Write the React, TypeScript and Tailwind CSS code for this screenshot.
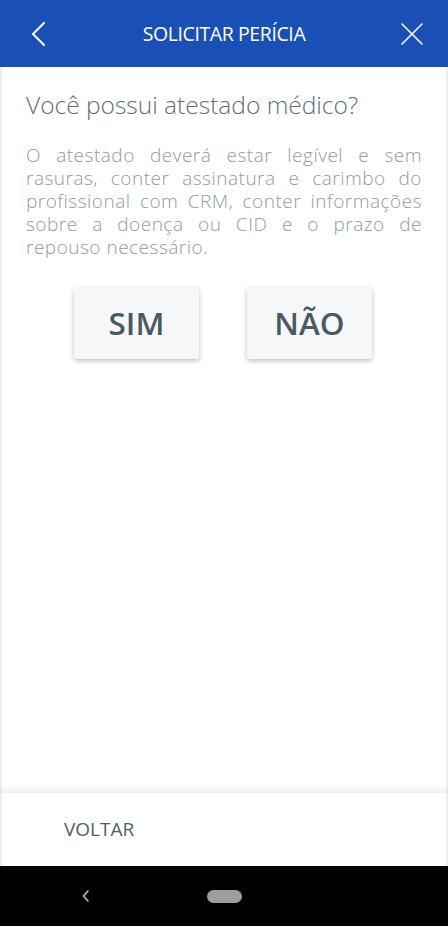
import React from 'react';

const lines = [
  'O atestado deverá estar legível e sem',
  'rasuras, conter assinatura e carimbo do',
  'profissional com CRM, conter informações',
  'sobre a doença ou CID e o prazo de',
];

export default function App() {
  return (
    <div className="flex h-[926px] w-[448px] flex-col bg-white font-['Open_Sans',sans-serif]">
      <header className="flex h-[67px] shrink-0 items-center justify-between bg-[#1a4fb5] px-[30px] text-white">
        <svg width="18" height="26" viewBox="0 0 18 26" fill="none">
          <path d="M14 2 L3 13 L14 24" stroke="white" strokeWidth="2" strokeLinecap="round" strokeLinejoin="round" />
        </svg>
        <h1 className="text-[19.5px] tracking-[-0.4px]">SOLICITAR PERÍCIA</h1>
        <svg width="24" height="24" viewBox="0 0 24 24" fill="none" className="-mr-[6px]">
          <path d="M2 2 L22 22 M22 2 L2 22" stroke="white" strokeWidth="1.6" strokeLinecap="round" />
        </svg>
      </header>

      <main className="flex flex-1 flex-col border-x-2 border-[#eeeeee] px-[24px] pt-[22px]">
        <h2 className="text-[24.5px] font-light leading-[32px] text-[#5f6e7a]">Você possui atestado médico?</h2>
        <p className="mt-[23px] text-[19px] font-light leading-[23px] tracking-[0.5px] text-[#8e9ca6]">
          {lines.map((l) => (
            <span key={l} className="block text-justify [text-align-last:justify]">
              {l}
            </span>
          ))}
          <span className="block">repouso necessário.</span>
        </p>
        <div className="mt-[28px] flex justify-center gap-[48px] pr-[2px]">
          <button className="h-[72px] w-[125px] rounded-[3px] bg-[#f6f7f9] text-[31.5px] font-semibold text-[#4b5963] shadow-[0_2px_5px_rgba(0,0,0,0.25)]">
            SIM
          </button>
          <button className="h-[72px] w-[125px] rounded-[3px] bg-[#f6f7f9] text-[31.5px] font-semibold text-[#4b5963] shadow-[0_2px_5px_rgba(0,0,0,0.25)]">
            NÃO
          </button>
        </div>
      </main>

      <footer className="flex h-[73px] shrink-0 items-center border-x-2 border-[#eeeeee] bg-white px-[62px] shadow-[0_-3px_6px_rgba(0,0,0,0.08)]">
        <span className="text-[19px] text-[#4f606b]">VOLTAR</span>
      </footer>

      <nav className="flex h-[60px] shrink-0 items-center bg-black">
        <div className="flex w-[172px] justify-center">
          <svg width="10" height="14" viewBox="0 0 10 14" fill="none">
            <path d="M7 2 L2.5 7 L7 12" stroke="#bdbdbd" strokeWidth="1.6" strokeLinecap="round" strokeLinejoin="round" />
          </svg>
        </div>
        <div className="ml-[35px] h-[13px] w-[35px] rounded-full bg-[#9e9e9e]" />
      </nav>
    </div>
  );
}
